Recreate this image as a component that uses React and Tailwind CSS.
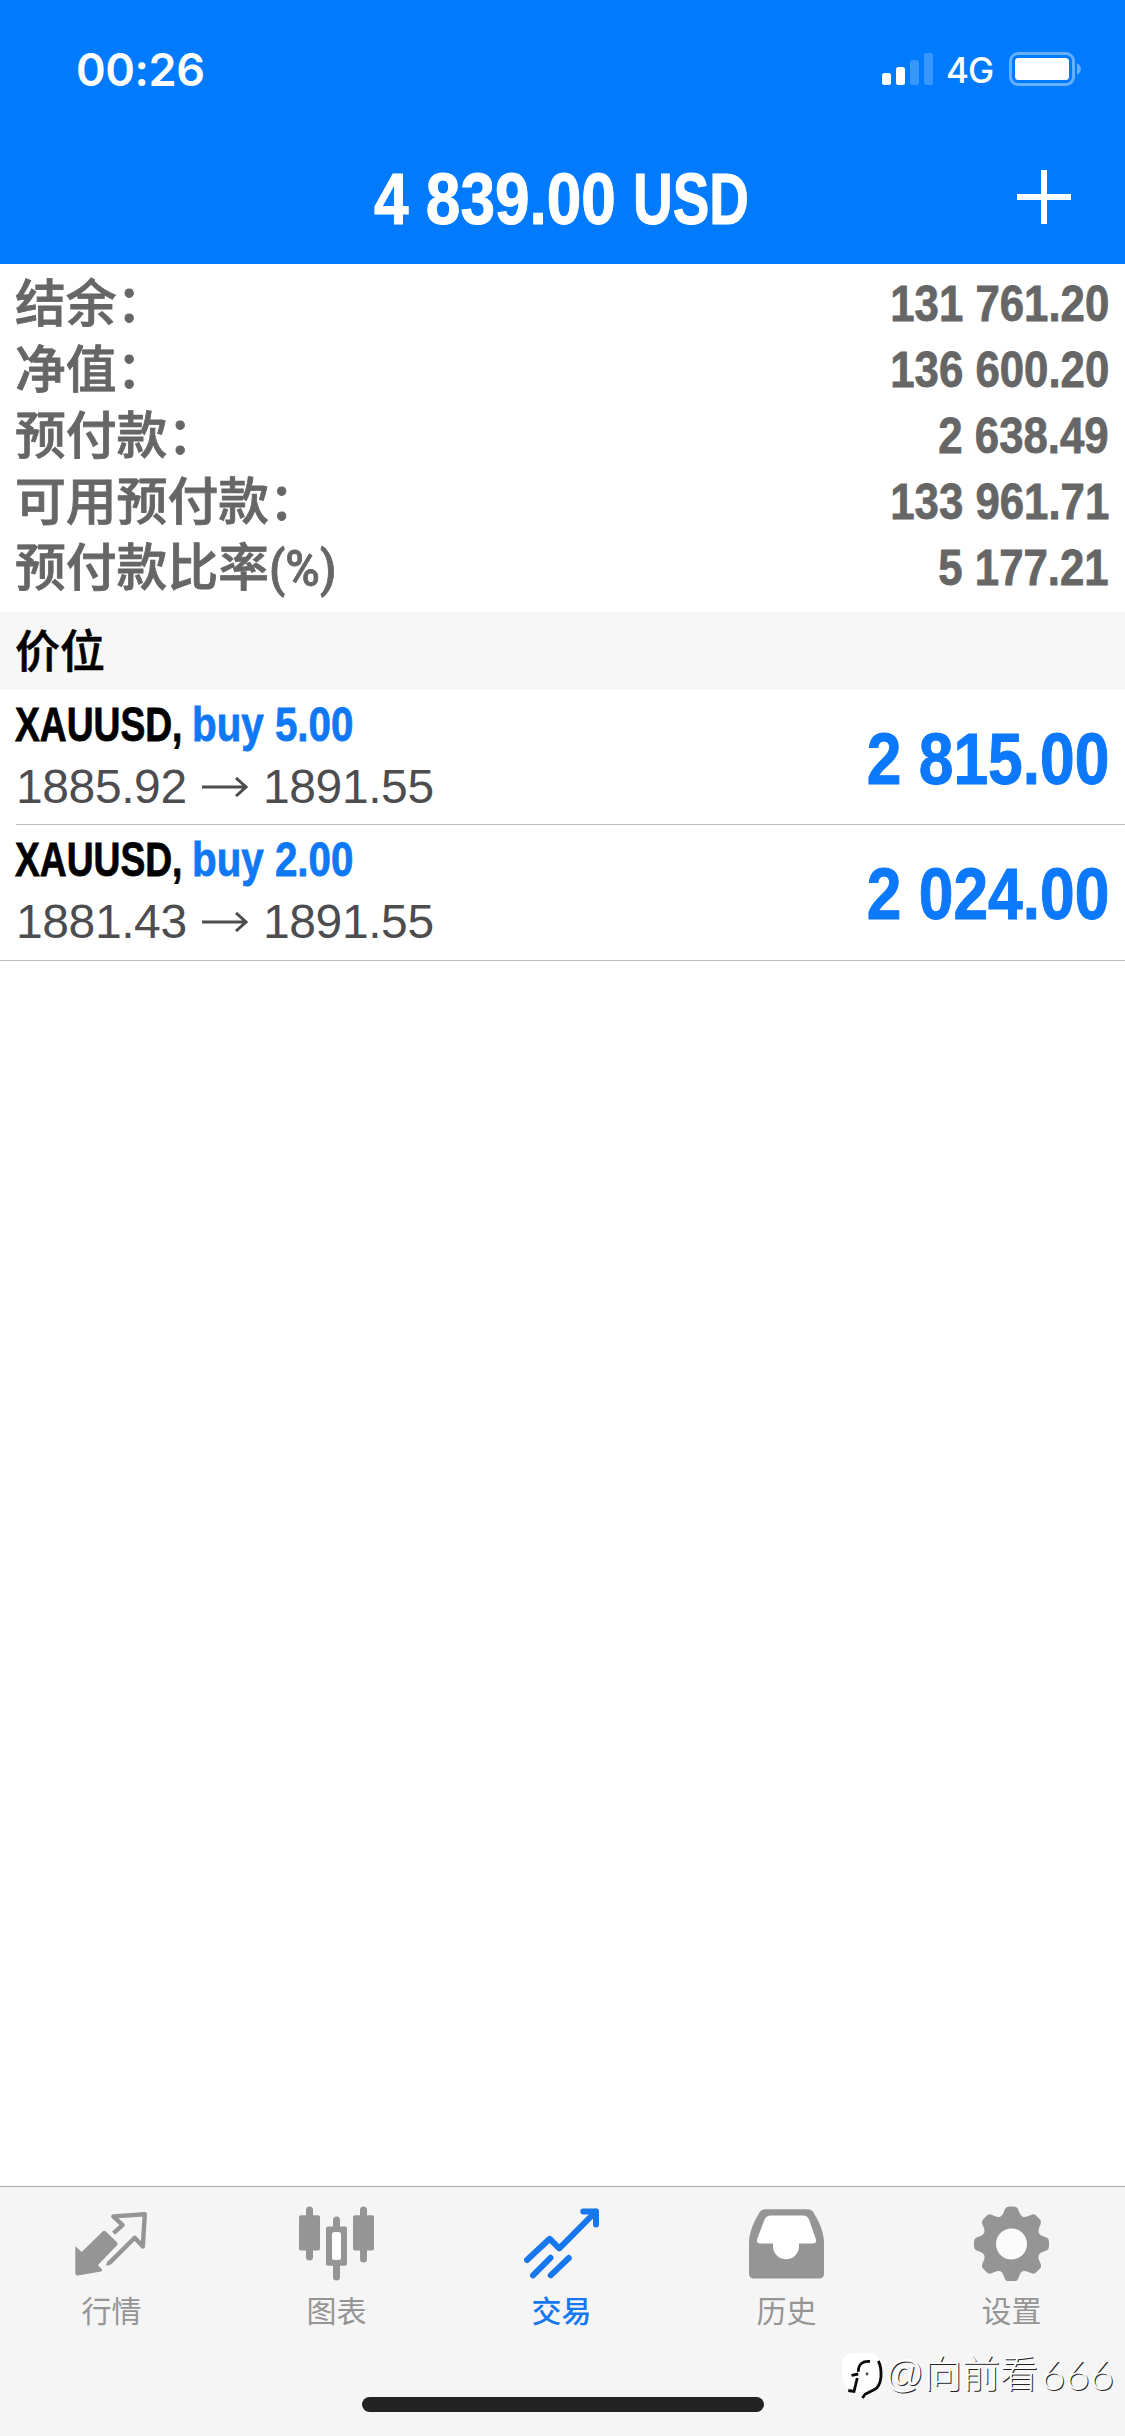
import React from "react";

const summary = [
  { label: "结余：", value: "131 761.20" },
  { label: "净值：", value: "136 600.20" },
  { label: "预付款：", value: "2 638.49" },
  { label: "可用预付款：", value: "133 961.71" },
  { label: "预付款比率", unit: "(%)", value: "5 177.21" },
];

const positions = [
  { id: 1, symbol: "XAUUSD,", volume: "buy 5.00", open: "1885.92", current: "1891.55", profit: "2 815.00" },
  { id: 2, symbol: "XAUUSD,", volume: "buy 2.00", open: "1881.43", current: "1891.55", profit: "2 024.00" },
];

const QuotesIcon = () => (
  <svg className="h-[75px] w-[75px]" viewBox="0 0 75 75" fill="none">
    <path
      d="M1.3 40.2 7.7 46 28.6 25.4Q30 24 31.5 25.3L43 36.2Q44.3 37.8 43 39.2L24 59 28 63.6Q28.6 65 27 65.6L4 69.5Q1.3 69.7 1.3 67Z"
      fill="currentColor"
    />
    <path
      d="M39.5 27.2 48.6 19.2 39.3 10.4 70.8 8.3 68.8 40.5 60.7 31.8 36 56.4Q34.5 57.7 32.8 57.2"
      stroke="currentColor"
      strokeWidth="4.4"
      strokeLinejoin="round"
    />
  </svg>
);

const ChartIcon = () => (
  <svg className="h-[75px] w-[75px]" viewBox="0 0 75 75" fill="currentColor">
    <rect x="0" y="9.2" width="21" height="35.3" rx="2" />
    <rect x="7" y="0.5" width="7" height="54" rx="3.5" />
    <rect x="27" y="20.5" width="21" height="39.3" rx="2" />
    <rect x="34" y="10.5" width="7" height="64" rx="3.5" />
    <rect x="33" y="26" width="9" height="28" rx="2.5" fill="#fff" />
    <rect x="54" y="9.2" width="21" height="35.3" rx="2" />
    <rect x="61" y="0.5" width="7" height="56" rx="3.5" />
  </svg>
);

const TradeIcon = () => (
  <svg
    className="h-[75px] w-[75px]"
    viewBox="0 0 75 75"
    fill="none"
    stroke="currentColor"
    strokeWidth="6"
    strokeLinecap="round"
    strokeLinejoin="round"
  >
    <path d="M3 54 25.7 32.8 35.3 42.4 71.5 5.8" />
    <path d="M59.3 5.4H72V18.6" />
    <path d="M9 69.3 26.5 51.8M26.7 69.3 44.8 52" />
  </svg>
);

const HistoryIcon = () => (
  <svg className="h-[75px] w-[75px]" viewBox="0 0 75 75">
    <path
      d="M0 37C0 25 6 14 10.5 6.5Q12.5 3.2 16.5 3.2H58.5Q62.5 3.2 64.5 6.5C69 14 75 25 75 37V67.5Q75 72.5 70 72.5H5Q0 72.5 0 67.5Z"
      fill="currentColor"
    />
    <path
      d="M22 9.5H54Q58.3 9.5 60 13.5L66.8 33Q68 37.5 64 37.5H50V40.2A13 13 0 0 1 24 40.2V37.5H11Q7 37.5 8.2 33L15.5 13.5Q17.5 9.5 22 9.5Z"
      fill="#fff"
    />
  </svg>
);

const SettingsIcon = () => (
  <svg className="h-[75px] w-[75px]" viewBox="0 0 75 75">
    <circle cx="37.5" cy="38" r="15.8" fill="#fbfbfb" />
    <circle cx="37.5" cy="38" r="22" fill="none" stroke="currentColor" strokeWidth="13" />
    {[0, 45, 90, 135, 180, 225, 270, 315].map((angle) => (
      <path
        key={angle}
        d="M37.5 20 26 10.9Q28.4 9.8 29.4 7L31 3Q32.2 .5 35 .5H40Q42.8 .5 44 3L45.6 7Q46.6 9.8 49 10.9Z"
        fill="currentColor"
        transform={`rotate(${angle} 37.5 38)`}
      />
    ))}
  </svg>
);

const tabs = [
  { name: "行情", Icon: QuotesIcon },
  { name: "图表", Icon: ChartIcon },
  { name: "交易", Icon: TradeIcon, active: true },
  { name: "历史", Icon: HistoryIcon },
  { name: "设置", Icon: SettingsIcon },
];

const StatusBar = () => (
  <div className="flex h-[138px] items-center pr-[42px] pl-[76px]">
    <span className="font-[Inter,sans-serif] text-[45px] leading-none font-semibold tracking-[-0.4px]">00:26</span>
    <div className="ml-auto flex items-center">
      <svg className="h-8 w-[52px]" viewBox="0 0 52 32" fill="currentColor">
        <rect x="0" y="20" width="9" height="12" rx="2.5" />
        <rect x="14" y="14" width="9" height="18" rx="2.5" />
        <rect x="28" y="7" width="9" height="25" rx="2.5" opacity="0.22" />
        <rect x="42" y="0" width="9" height="32" rx="2.5" opacity="0.22" />
      </svg>
      <span className="mt-0.5 ml-3 w-[63px] font-[Inter,sans-serif] text-[35px] leading-none font-medium tracking-tight">
        4G
      </span>
      <svg className="h-[34px] w-[74px]" viewBox="0 0 74 34">
        <rect x="1.5" y="1.5" width="63" height="31" rx="7.5" fill="none" stroke="#fff" strokeWidth="3" opacity="0.4" />
        <rect x="6" y="6" width="54" height="22" rx="3.5" fill="#fff" />
        <path d="M68 11.5C73.2 13 73.2 21 68 22.5Z" fill="#fff" opacity="0.4" />
      </svg>
    </div>
  </div>
);

const PositionRow = ({ position }) => (
  <div className="flex h-full items-center justify-between pr-4">
    <div className="-ml-px">
      <div className="flex h-[60px] items-center text-[48px] leading-none font-bold [-webkit-text-stroke:0.8px_currentColor]">
        <span className="w-[177px] origin-left scale-x-[0.775] whitespace-nowrap text-black">{position.symbol}</span>
        <span className="origin-left scale-x-[0.84] whitespace-nowrap text-[#0f78f5]">{position.volume}</span>
      </div>
      <div className="flex h-[64px] items-center pl-px text-[48px] leading-none tracking-[-0.4px] text-[#4d4d50]">
        <span className="w-[186px]">{position.open}</span>
        <svg className="h-5 w-[46px]" viewBox="0 0 46 20" fill="none" stroke="currentColor" strokeWidth="3">
          <path d="M0 10H44M34 1 44 10 34 19" />
        </svg>
        <span className="ml-[15px]">{position.current}</span>
      </div>
    </div>
    <span className="mt-1 origin-right scale-x-[0.865] text-[72px] leading-none font-bold whitespace-nowrap text-[#0c78fb] [-webkit-text-stroke:1px_currentColor]">
      {position.profit}
    </span>
  </div>
);

const Watermark = () => (
  <div className="absolute top-[2348px] left-[841px] flex items-center text-[#fdfdfd]">
    <svg className="mt-0.5 h-[50px] w-[46px]" viewBox="0 0 46 50">
      <path d="M12 3H28Q39 4 39 15V26Q38 37 22 42 17 43 10 39 1 36 1 24V15Q1 4 12 3Z" fill="#fff" />
      <path
        d="M29 11.5Q17.5 10.5 17.3 21.7M10.5 25.3 17.3 24M16.3 28 13 41.5 7.3 40.5M37.3 11Q40.5 17 40 26.7 39 37 33.5 39.5L24 44.3 21.5 48"
        fill="none"
        stroke="#0a0a0a"
        strokeWidth="2.8"
      />
      <circle cx="26" cy="24" r="1.4" fill="#444" />
    </svg>
    <span className="flex items-center text-[38px] leading-[50px] font-light whitespace-nowrap [text-shadow:1px_1px_0.5px_#222]">
      <span className="-ml-0.5 w-[39px]">@</span>
      <span>向前看</span>
      <span className="ml-[3px] font-[Lato,sans-serif] text-[42px]">666</span>
    </span>
  </div>
);

const App = () => {
  return (
    <div className="relative flex h-[2436px] w-[1125px] flex-col overflow-hidden bg-white font-['Liberation_Sans','Noto_Sans_CJK_SC',sans-serif]">
      <header className="h-[264px] bg-[#007aff] text-white">
        <StatusBar />
        <div className="relative flex h-[120px] items-center justify-center">
          <h1 className="flex pt-0.5 pr-[3px] text-[72px] leading-none font-bold whitespace-nowrap [-webkit-text-stroke:1px_currentColor]">
            <span className="w-[259px] origin-left scale-x-[0.863]">4 839.00</span>
            <span className="w-[116px] origin-left scale-x-[0.763]">USD</span>
          </h1>
          <svg
            className="absolute top-8 right-[54px] h-[54px] w-[54px]"
            viewBox="0 0 54 54"
            stroke="currentColor"
            strokeWidth="6"
          >
            <path d="M27 0V54M0 27H54" />
          </svg>
        </div>
      </header>

      <section className="h-[348px] pt-[6px] pr-4 pl-[15px] text-[#666] [-webkit-text-stroke:0.8px_currentColor]">
        {summary.map((item) => (
          <div key={item.label} className="flex h-[66px] items-center justify-between">
            <span className="mt-1 flex text-[50.8px] leading-none font-medium">
              {item.label}
              {item.unit && (
                <span className="origin-left scale-x-[0.94] font-[Roboto,sans-serif] text-[50px] leading-none">
                  {item.unit}
                </span>
              )}
            </span>
            <span className="mt-0.5 origin-right scale-x-[0.875] text-[50px] leading-none font-bold whitespace-nowrap">
              {item.value}
            </span>
          </div>
        ))}
      </section>

      <h2 className="flex h-[78px] items-center bg-[#f7f7f7] pt-0.5 pl-[15px] text-[45px] leading-none font-medium text-black [-webkit-text-stroke:0.6px_currentColor]">
        价位
      </h2>

      <section>
        <div className="ml-4 h-[135px] border-b border-[#bcbcc0]">
          <PositionRow position={positions[0]} />
        </div>
        <div className="h-[136px] border-b border-[#bcbcc0] pb-px pl-4">
          <PositionRow position={positions[1]} />
        </div>
      </section>

      <footer className="mt-auto flex h-[250px] flex-col items-center border-t border-[#a9a9a9] bg-[#f5f5f5]">
        <nav className="-ml-0.5 flex h-[210px] pt-[19px]">
          {tabs.map(({ name, Icon, active }) => (
            <div
              key={name}
              className={`flex w-[225px] flex-col items-center ${active ? "font-medium text-[#1677ee]" : "text-[#959595]"}`}
            >
              <Icon />
              <span className="mt-[11px] font-['Noto_Sans_CJK_SC',sans-serif] text-[30px] leading-[34px]">{name}</span>
            </div>
          ))}
        </nav>
        <div className="h-[15px] w-[402px] rounded-full bg-[#222]" />
      </footer>

      <Watermark />
    </div>
  );
};

export default App;
